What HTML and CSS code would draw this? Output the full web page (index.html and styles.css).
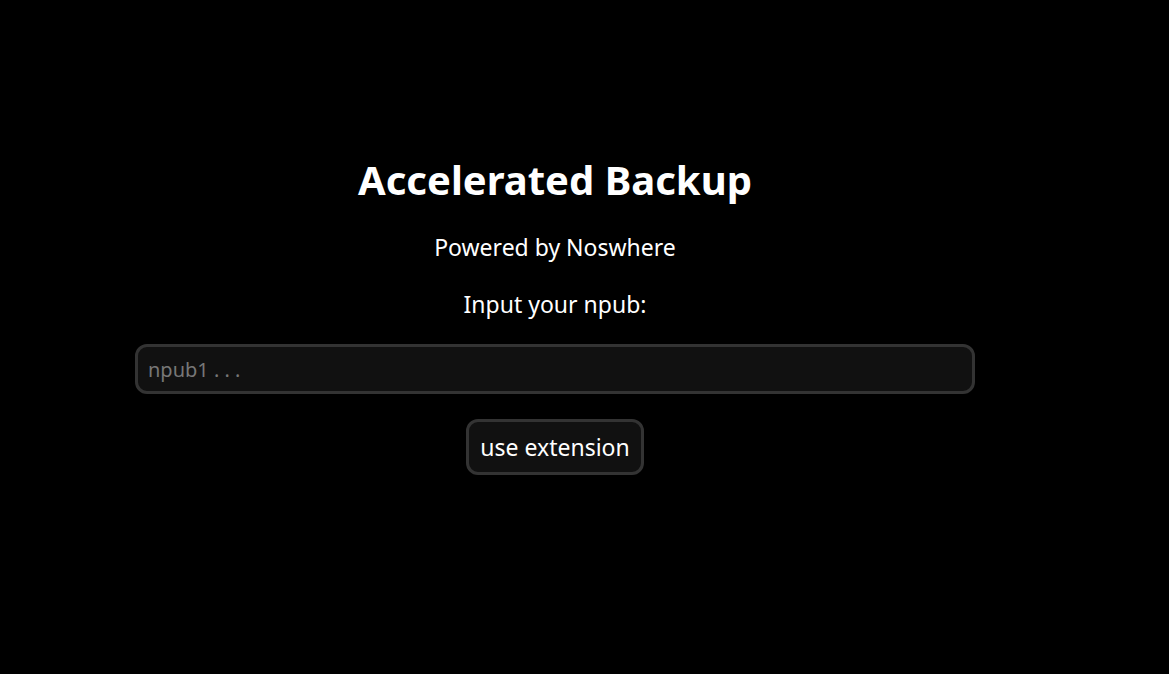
FILE: index.html
```html
<!DOCTYPE html>
<html lang="en">
<head>
<meta charset="utf-8">
<title>Accelerated Backup</title>
<link rel="stylesheet" href="styles.css">
</head>
<body>
<main class="page">
  <h1 class="title">Accelerated Backup</h1>
  <p class="subtitle">Powered by Noswhere</p>
  <label class="label" for="npub">Input your npub:</label>
  <input class="npub-input" id="npub" type="text" placeholder="npub1 . . .">
  <button class="ext-button" type="button">use extension</button>
</main>
</body>
</html>
```

FILE: styles.css
```css
html, body {
  margin: 0;
  padding: 0;
  background: #000;
  color: #fff;
  font-family: "Noto Sans", "DejaVu Sans", sans-serif;
}

.page {
  width: 840px;
  margin-left: 135px;
  padding-top: 153px;
  display: flex;
  flex-direction: column;
  align-items: center;
}

.title {
  margin: 0;
  font-size: 40px;
  font-weight: 700;
  line-height: 54px;
}

.subtitle {
  margin: 25px 0 0;
  font-size: 23px;
  line-height: 30px;
}

.label {
  margin-top: 27px;
  font-size: 23px;
  line-height: 30px;
}

.npub-input {
  margin-top: 25px;
  box-sizing: border-box;
  width: 840px;
  height: 50px;
  padding: 0 10px;
  background: #111;
  border: 3px solid #333;
  border-radius: 12px;
  color: #fff;
  font-family: inherit;
  font-size: 20px;
  outline: none;
}

.npub-input::placeholder {
  color: #777;
}

.ext-button {
  margin-top: 25px;
  box-sizing: border-box;
  height: 56px;
  padding: 0 11px;
  background: #111;
  border: 3px solid #333;
  border-radius: 12px;
  color: #fff;
  font-family: inherit;
  font-size: 23px;
  cursor: pointer;
}
```
